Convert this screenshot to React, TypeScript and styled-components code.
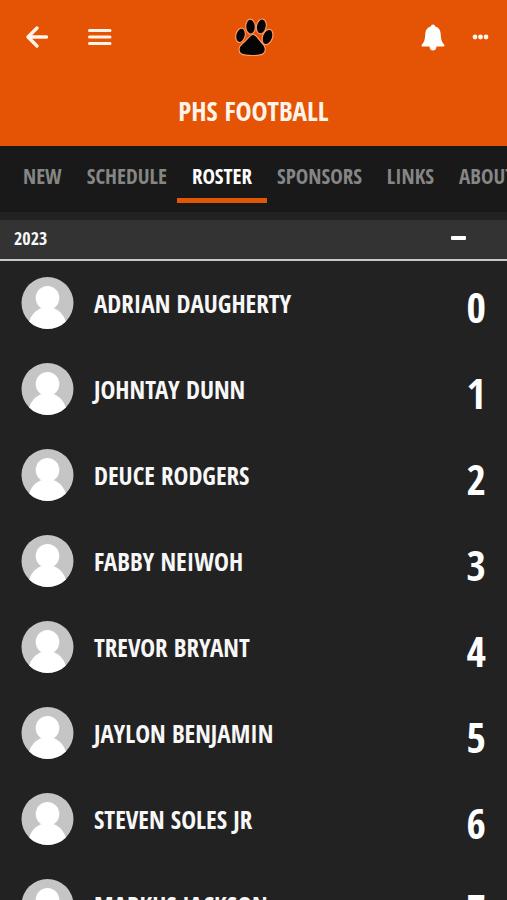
import React from "react";
import styled, { createGlobalStyle } from "styled-components";

const Global = createGlobalStyle`
  * { box-sizing: border-box; }
  body { margin: 0; background: #222; color: #f7f7f7; font-family: "Open Sans Condensed", "Noto Sans Condensed", "Liberation Sans Narrow", "Open Sans", sans-serif; font-weight: 700; }
  button { font: inherit; color: inherit; background: none; border: 0; padding: 0; cursor: pointer; }
`;

const Page = styled.div`
  height: 100vh;
  overflow: hidden;
  display: flex;
  flex-direction: column;
`;

const Header = styled.header`
  background: #e45404;
  color: #fff4ea;
  height: 146px;
  flex: none;
`;

const TopBar = styled.div`
  display: grid;
  grid-template-columns: 1fr auto 1fr;
  align-items: center;
  height: 74px;
  padding: 0 18px;
`;

const Actions = styled.div<{ $end?: boolean; $gap: number }>`
  display: flex;
  align-items: center;
  gap: ${(p) => p.$gap}px;
  justify-content: ${(p) => (p.$end ? "flex-end" : "flex-start")};
`;

const IconButton = styled.button`
  display: flex;
`;

const Title = styled.h1`
  margin: 0;
  padding-top: 18px;
  font-size: 27px;
  line-height: 38px;
  text-align: center;
`;

const Tabs = styled.nav`
  display: flex;
  gap: 25px;
  height: 66px;
  flex: none;
  padding: 14px 0 0 23px;
  background: #191919;
  overflow: hidden;
  white-space: nowrap;
`;

const Tab = styled.a<{ $active?: boolean }>`
  position: relative;
  flex: none;
  height: 43px;
  font-size: 21px;
  line-height: 32px;
  text-decoration: none;
  color: ${(p) => (p.$active ? "#fff" : "#868686")};
  &::after {
    content: "";
    display: ${(p) => (p.$active ? "block" : "none")};
    position: absolute;
    left: -15px;
    right: -15px;
    bottom: 0;
    height: 5px;
    background: #e05806;
  }
`;

const Section = styled.button`
  && {
    display: flex;
    align-items: center;
    justify-content: space-between;
    flex: none;
    height: 41px;
    margin-top: 8px;
    padding: 0 41px 4px 14px;
    background: #333;
    border-bottom: 2px solid #c8c8c8;
    font-size: 18px;
    line-height: 24px;
  }
`;

const Minus = styled.span`
  width: 15px;
  height: 4px;
  border-radius: 1px;
  background: #fff;
`;

const Roster = styled.ul`
  list-style: none;
  margin: 0;
  padding: 0;
`;

const Player = styled.li`
  display: flex;
  align-items: center;
  gap: 20px;
  height: 86px;
  padding: 0 21px 2px;
`;

const Name = styled.span`
  flex: 1;
  font-size: 25px;
  line-height: 34px;
`;

const Jersey = styled.span`
  font-size: 42px;
  line-height: 56px;
  padding-top: 8px;
  color: #fff;
`;

const Avatar = () => (
  <svg width="53" height="53" viewBox="0 0 53 53" aria-hidden="true">
    <defs>
      <clipPath id="face"><circle cx="26.5" cy="26" r="26" /></clipPath>
    </defs>
    <g clipPath="url(#face)">
      <rect width="53" height="53" fill="#c5c5c5" />
      <ellipse cx="26.5" cy="21" rx="11.800" ry="12" fill="#fff" />
      <path d="M7.500 53V47C9.500 38 15.500 32 21.500 31H31.500C37.500 32 43.500 38 45.500 47V53Z" fill="#fff" />
    </g>
  </svg>
);

const Paw = () => (
  <svg width="40" height="40" viewBox="0 0 40 40" fill="#050505" stroke="#ff9a68" strokeWidth="1.2" role="img" aria-label="PHS">
    <ellipse cx="6.5" cy="18.300" rx="4.700" ry="7.300" transform="rotate(14 6.5 18.300)" />
    <ellipse cx="16.500" cy="9.700" rx="4.800" ry="7.500" transform="rotate(-3 16.500 9.700)" />
    <ellipse cx="27.300" cy="9.400" rx="4.900" ry="7.500" transform="rotate(12 27.300 9.400)" />
    <ellipse cx="33.500" cy="20" rx="5" ry="8" transform="rotate(20 33.500 20)" />
    <path d="M19 17.500C16 17.500 13.500 22.500 8.500 26.500C4 30 4 35 7.500 37C10 38.500 13.500 38.500 18.500 38.500C23.500 38.500 27.500 38.500 29.500 36.500C32.500 34 31.500 29 28 26C25 23 22.500 17.500 19 17.500Z" />
  </svg>
);

const tabs = ["NEW", "SCHEDULE", "ROSTER", "SPONSORS", "LINKS", "ABOUT"];
const players = ["ADRIAN DAUGHERTY", "JOHNTAY DUNN", "DEUCE RODGERS", "FABBY NEIWOH", "TREVOR BRYANT", "JAYLON BENJAMIN", "STEVEN SOLES JR", "MARKUS JACKSON"];

export default function App() {
  return (
    <Page>
      <Global />
      <Header>
        <TopBar>
          <Actions $gap={37}>
            <IconButton aria-label="Back">
              <svg width="31" height="24" viewBox="-5 0 31 24" fill="none" stroke="currentColor" strokeWidth="3.400" strokeLinecap="round" strokeLinejoin="round"><path d="M23.500 12H5M14 3L5 12L14 21" /></svg>
            </IconButton>
            <IconButton aria-label="Menu">
              <svg width="26" height="18" viewBox="0 0 26 18" stroke="currentColor" strokeWidth="3" strokeLinecap="round"><path d="M3.500 2.500H24M3.500 9H24M3.500 15.500H24" /></svg>
            </IconButton>
          </Actions>
          <Paw />
          <Actions $gap={27} $end>
            <IconButton aria-label="Notifications">
              <svg width="24" height="27" viewBox="0 0 24 27" fill="#fff"><path d="M12 0.500C13.300 0.500 14 1.300 14.200 2.500C18 3.500 19.500 6.500 19.700 10C20 16 21 18 23 20.500C24 21.700 23.500 22.500 22.500 22.500H15.500C15.300 25 14 26.500 12 26.500S8.700 25 8.500 22.500H1.500C0.500 22.500 0 21.700 1 20.500C3 18 4 16 4.300 10C4.500 6.500 6 3.500 9.800 2.500C10 1.300 10.700 0.500 12 0.500Z" /></svg>
            </IconButton>
            <IconButton aria-label="More">
              <svg width="17" height="6" viewBox="0 0 17 6" fill="currentColor"><circle cx="3" cy="3" r="2.400" /><circle cx="8.500" cy="3" r="2.400" /><circle cx="14" cy="3" r="2.400" /></svg>
            </IconButton>
          </Actions>
        </TopBar>
        <Title>PHS FOOTBALL</Title>
      </Header>
      <Tabs>
        {tabs.map((t) => (
          <Tab key={t} href={"#" + t.toLowerCase()} $active={t === "ROSTER"} aria-current={t === "ROSTER" ? "page" : undefined}>{t}</Tab>
        ))}
      </Tabs>
      <Section aria-expanded="true">
        2023
        <Minus />
      </Section>
      <Roster>
        {players.map((name, i) => (
          <Player key={name}>
            <Avatar />
            <Name>{name}</Name>
            <Jersey>{i}</Jersey>
          </Player>
        ))}
      </Roster>
    </Page>
  );
}
